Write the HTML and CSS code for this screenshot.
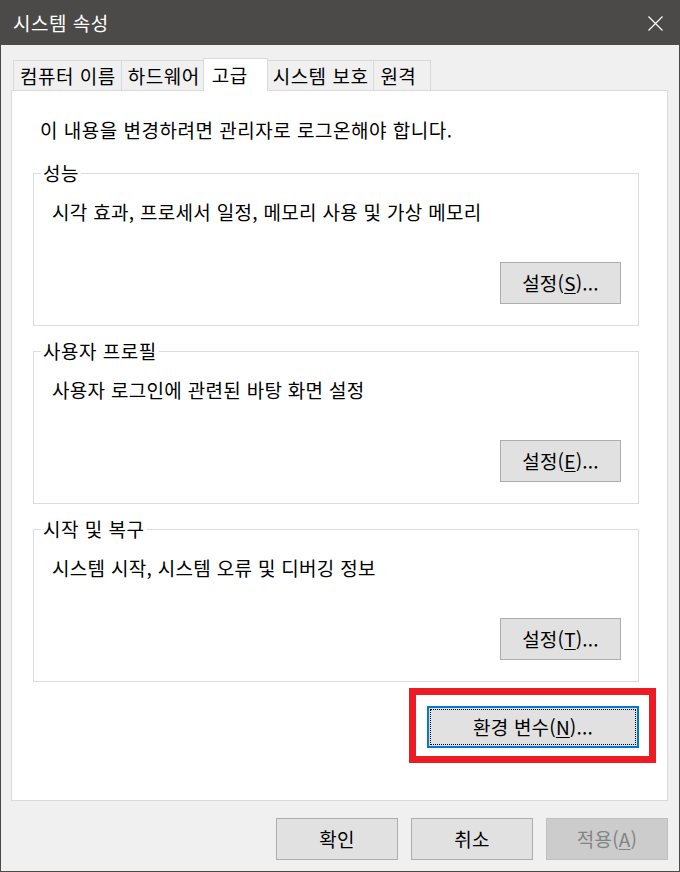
FILE: index.html
```html
<!DOCTYPE html>
<html lang="ko">
<head>
<meta charset="utf-8">
<title>시스템 속성</title>
<link rel="stylesheet" href="styles.css">
</head>
<body>
<div class="window">
  <div class="titlebar">
    <span class="title">시스템 속성</span>
    <svg class="close" width="15" height="15" viewBox="0 0 15 15" aria-hidden="true">
      <path d="M0.5 0.5L14.5 14.5M14.5 0.5L0.5 14.5" stroke="#ffffff" stroke-width="1.2" fill="none"/>
    </svg>
  </div>
  <div class="body">
    <div class="tabs">
      <div class="tab">컴퓨터 이름</div>
      <div class="tab">하드웨어</div>
      <div class="tab active">고급</div>
      <div class="tab">시스템 보호</div>
      <div class="tab">원격</div>
    </div>
    <div class="panel">
      <p class="info">이 내용을 변경하려면 관리자로 로그온해야 합니다.</p>
      <fieldset class="group">
        <legend>성능</legend>
        <p class="desc">시각 효과, 프로세서 일정, 메모리 사용 및 가상 메모리</p>
        <div class="group-actions"><button class="btn">설정(<u>S</u>)...</button></div>
      </fieldset>
      <fieldset class="group">
        <legend>사용자 프로필</legend>
        <p class="desc">사용자 로그인에 관련된 바탕 화면 설정</p>
        <div class="group-actions"><button class="btn">설정(<u>E</u>)...</button></div>
      </fieldset>
      <fieldset class="group">
        <legend>시작 및 복구</legend>
        <p class="desc">시스템 시작, 시스템 오류 및 디버깅 정보</p>
        <div class="group-actions"><button class="btn">설정(<u>T</u>)...</button></div>
      </fieldset>
      <div class="env-row">
        <div class="env-wrap">
          <button class="btn env">환경 변수(<u>N</u>)...</button>
          <div class="highlight"></div>
        </div>
      </div>
    </div>
    <div class="footer">
      <button class="btn footer-btn">확인</button>
      <button class="btn footer-btn">취소</button>
      <button class="btn footer-btn" disabled>적용(<u>A</u>)</button>
    </div>
  </div>
</div>
</body>
</html>
```
FILE: styles.css
```css
html, body {
  margin: 0;
  padding: 0;
}
body {
  width: 680px;
  height: 872px;
  overflow: hidden;
  background: #f0f0f0;
  font-family: "Noto Sans CJK KR", "Noto Sans", sans-serif;
  font-size: 19px;
  letter-spacing: 0.5px;
  line-height: 24px;
  color: #000;
}
.window {
  box-sizing: border-box;
  width: 680px;
  height: 872px;
  border: 1px solid #4b4a48;
  background: #f0f0f0;
  display: flex;
  flex-direction: column;
}
.titlebar {
  height: 44px;
  flex: none;
  background: #4b4a48;
  color: #fff;
  display: flex;
  align-items: center;
  justify-content: space-between;
  padding: 0 16px 0 12px;
}
.title {
  font-size: 19px;
  letter-spacing: 0.5px;
}
.close {
  display: block;
}
.body {
  padding: 13px 11px 0 10px;
  display: flex;
  flex-direction: column;
}
.tabs {
  display: flex;
  align-items: flex-end;
  height: 33px;
  margin: 0 0 -1px 2px;
  position: relative;
  z-index: 1;
}
.tab {
  box-sizing: border-box;
  height: 30px;
  min-width: 58px;
  margin: 0 -1px 1px 0;
  padding: 0 5px 0 6px;
  border: 1px solid #d9d9d9;
  border-bottom: none;
  background: #f0f0f0;
  line-height: 29px;
  white-space: nowrap;
}
.tab.active {
  height: 33px;
  min-width: 65px;
  margin: 0 -2px 0 -2px;
  padding: 0 8px;
  background: #fff;
  position: relative;
  z-index: 2;
  line-height: 32px;
}
.panel {
  box-sizing: border-box;
  height: 711px;
  border: 1px solid #d9d9d9;
  background: #fff;
  padding: 27px 28px 0 21px;
  display: flex;
  flex-direction: column;
}
.info {
  margin: 0 0 0 7px;
}
.group {
  margin: 19px 0 0 0;
  padding: 15px 17px 21px 7px;
  border: 1px solid #dcdcdc;
  min-width: 0;
}
.group + .group {
  margin-top: 13px;
}
.group legend {
  padding: 0 2px;
  line-height: 24px;
}
.desc {
  margin: 0 0 0 11px;
  letter-spacing: 0.3px;
}
.group-actions {
  display: flex;
  justify-content: flex-end;
  margin-top: 38px;
}
.btn {
  box-sizing: border-box;
  height: 42px;
  width: 121px;
  padding: 0;
  border: 1px solid #adadad;
  background: #e1e1e1;
  color: #000;
  font: inherit;
  letter-spacing: 0.2px;
}
.btn u {
  text-underline-offset: 2px;
}
.env-row {
  display: flex;
  justify-content: flex-end;
  margin-top: 24px;
}
.env-wrap {
  position: relative;
}
.btn.env {
  width: 212px;
  border: 1px solid #0078d7;
  box-shadow: inset 0 0 0 1px #0078d7;
  outline: 1px dotted #000;
  outline-offset: -4px;
}
.highlight {
  position: absolute;
  left: -18px;
  top: -18px;
  right: -17px;
  bottom: -15px;
  border: 7px solid #ed1c24;
  pointer-events: none;
}
.footer {
  display: flex;
  justify-content: flex-end;
  gap: 13px;
  margin-top: 17px;
}
.footer-btn {
  width: 122px;
}
.footer-btn:disabled {
  background: #cccccc;
  border-color: #bfbfbf;
  color: #838383;
}
```
